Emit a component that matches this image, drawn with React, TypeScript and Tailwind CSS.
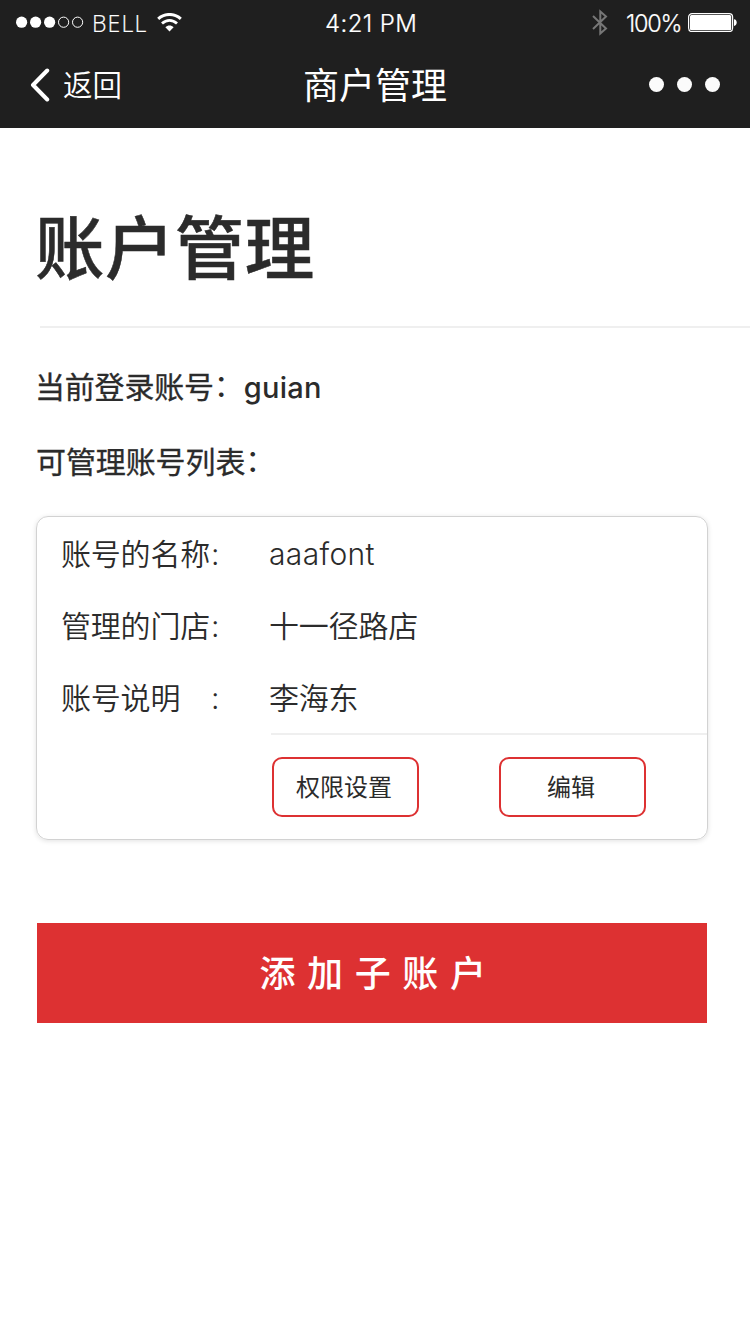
import type { ReactNode } from "react";

function StatusBar() {
  return (
    <div className="flex h-11 items-center pl-4 pr-[12px] text-[24px] leading-[44px] whitespace-nowrap">
      <svg className="h-[12px] w-[68px] shrink-0" viewBox="0 0 68 12" fill="none">
        <circle cx="5.6" cy="6.2" r="5.6" fill="#fff" />
        <circle cx="19.6" cy="6.2" r="5.6" fill="#fff" />
        <circle cx="33.6" cy="6.2" r="5.6" fill="#fff" />
        <circle cx="47.6" cy="6.2" r="5.1" stroke="#fff" />
        <circle cx="61.6" cy="6.2" r="5.1" stroke="#fff" />
      </svg>
      <span className="ml-[8px] w-[65px] pt-px font-['Open_Sans','Noto_Sans',sans-serif] text-[23px] font-[350] tracking-[1.2px] [-webkit-text-stroke:0.2px]">BELL</span>
      <svg className="h-[19px] w-[25px] shrink-0" viewBox="0 0 25 19" fill="none" stroke="#fff">
        <path d="M1.2 5.8C7.5 0 17.5 0 23.8 5.8" strokeWidth="3" />
        <path d="M5 10.5C9.5 6.2 15.5 6.2 20 10.5" strokeWidth="2.8" />
        <path d="M12.5 18.5L8.4 14.2C10.6 11.9 14.4 11.9 16.6 14.2Z" fill="#fff" stroke="none" />
      </svg>
      <span className="ml-[143px] w-[267px] pt-[3px] text-[24px] font-[350] tracking-[0.4px] [-webkit-text-stroke:0.2px]">4:21 PM</span>
      <svg className="h-[28px] w-[16px] shrink-0" viewBox="0 0 16 28" fill="none" stroke="#777" strokeWidth="2">
        <path d="M1 8L14 20.5L8.3 25.5V3.5L14 8.5L1 21" />
      </svg>
      <span className="ml-[18px] w-[61px] pt-[3px] text-[23.5px] font-[350] tracking-[-1.3px] [-webkit-text-stroke:0.2px]">100%</span>
      <svg className="ml-px h-[20px] w-[49px] shrink-0" viewBox="0 0 49 20">
        <rect x="0.6" y="1.6" width="44" height="18" rx="3.5" fill="none" stroke="#fff" strokeWidth="1.2" />
        <rect x="2" y="3" width="41.2" height="15.2" rx="1.5" fill="#fff" />
        <path d="M46 7.3C49.6 7.3 49.6 13.9 46 13.9Z" fill="#fff" />
      </svg>
    </div>
  );
}

function NavBar() {
  return (
    <div className="grid h-[81px] grid-cols-3 items-center pr-[30px] pl-[30px]">
      <div className="flex items-center font-[350]">
        <svg className="h-[34px] w-[20px]" viewBox="0 0 20 34" fill="none">
          <path d="M17.2 2.5L3 17L17.2 31.5" stroke="#fff" strokeWidth="4" strokeLinecap="round" strokeLinejoin="round" />
        </svg>
        <span className="ml-[13px] text-[29.5px] leading-[40px]">返回</span>
      </div>
      <h1 className="pt-[3px] text-center text-[36px] leading-[40px] font-normal">商户管理</h1>
      <div className="flex justify-end gap-[13px]">
        <i className="size-[15px] rounded-full bg-[#fbfbfb]" />
        <i className="size-[15px] rounded-full bg-[#fbfbfb]" />
        <i className="size-[15px] rounded-full bg-[#fbfbfb]" />
      </div>
    </div>
  );
}

function Row({ label, children }: { label: ReactNode; children: ReactNode }) {
  return (
    <div className="flex h-[72px] items-center text-[30px] leading-[70px] font-[350] whitespace-nowrap">
      <div className="flex w-[158px] justify-between">
        <span className="tracking-[-0.2px]">{label}</span>
        <span className="w-[8px]">:</span>
      </div>
      <div className="ml-[50px] tracking-[-0.2px]">{children}</div>
    </div>
  );
}

function OutlineButton({ children }: { children: ReactNode }) {
  return (
    <button className="h-[60px] w-[147px] rounded-[10px] border-2 border-[#dd3132] pr-[3px] text-center text-[24px] leading-[58px]">
      {children}
    </button>
  );
}

export default function App() {
  return (
    <div className="min-h-[1334px] w-[750px] bg-white font-['Inter','Noto_Sans_CJK_SC',sans-serif] text-[#2b2b2b]">
      <header className="h-[128px] bg-[#1f1f1f] text-white">
        <StatusBar />
        <NavBar />
      </header>
      <main>
        <h2 className="pt-[71px] pl-[35px] text-[69.5px] leading-[100px] font-medium tracking-[0.4px] [-webkit-text-stroke:0.5px]">账户管理</h2>
        <div className="mt-[27px] ml-10 h-[2px] bg-[#efefef]" />
        <p className="mt-[39px] h-10 pl-[35px] text-[30px] leading-[40px] tracking-[-0.2px] [-webkit-text-stroke:0.3px]">
          当前登录账号<span className="align-[2px] leading-none [-webkit-text-stroke:0]">：</span>
          <span className="text-[29px] font-medium tracking-[0.3px] [-webkit-text-stroke:0]">guian</span>
        </p>
        <p className="mt-[35px] h-10 pl-[36px] text-[30px] leading-[40px] tracking-[-0.1px] [-webkit-text-stroke:0.3px]">
          可管理账号列表<span className="align-[2px] leading-none [-webkit-text-stroke:0]">：</span>
        </p>
        <section className="mt-[34px] ml-9 h-[324px] w-[672px] rounded-[12px] border border-[#d2d2d2] shadow-[0_1px_5px_rgba(0,0,0,0.12)]">
          <div className="pt-px pl-6">
            <Row label="账号的名称"><span className="tracking-[0.35px]">aaafont</span></Row>
            <Row label="管理的门店">十一径路店</Row>
            <Row label="账号说明">李海东</Row>
          </div>
          <div className="-mt-px ml-[234px] h-[2px] bg-[#efefef]" />
          <div className="mt-[22px] ml-[235px] flex gap-20">
            <OutlineButton>权限设置</OutlineButton>
            <OutlineButton>编辑</OutlineButton>
          </div>
        </section>
        <button className="mt-[83px] ml-[37px] block h-[100px] w-[670px] bg-[#dd3132] pl-[13px] text-center text-[36px] leading-[102px] font-medium tracking-[11.6px] text-white">
          添加子账户
        </button>
      </main>
    </div>
  );
}
